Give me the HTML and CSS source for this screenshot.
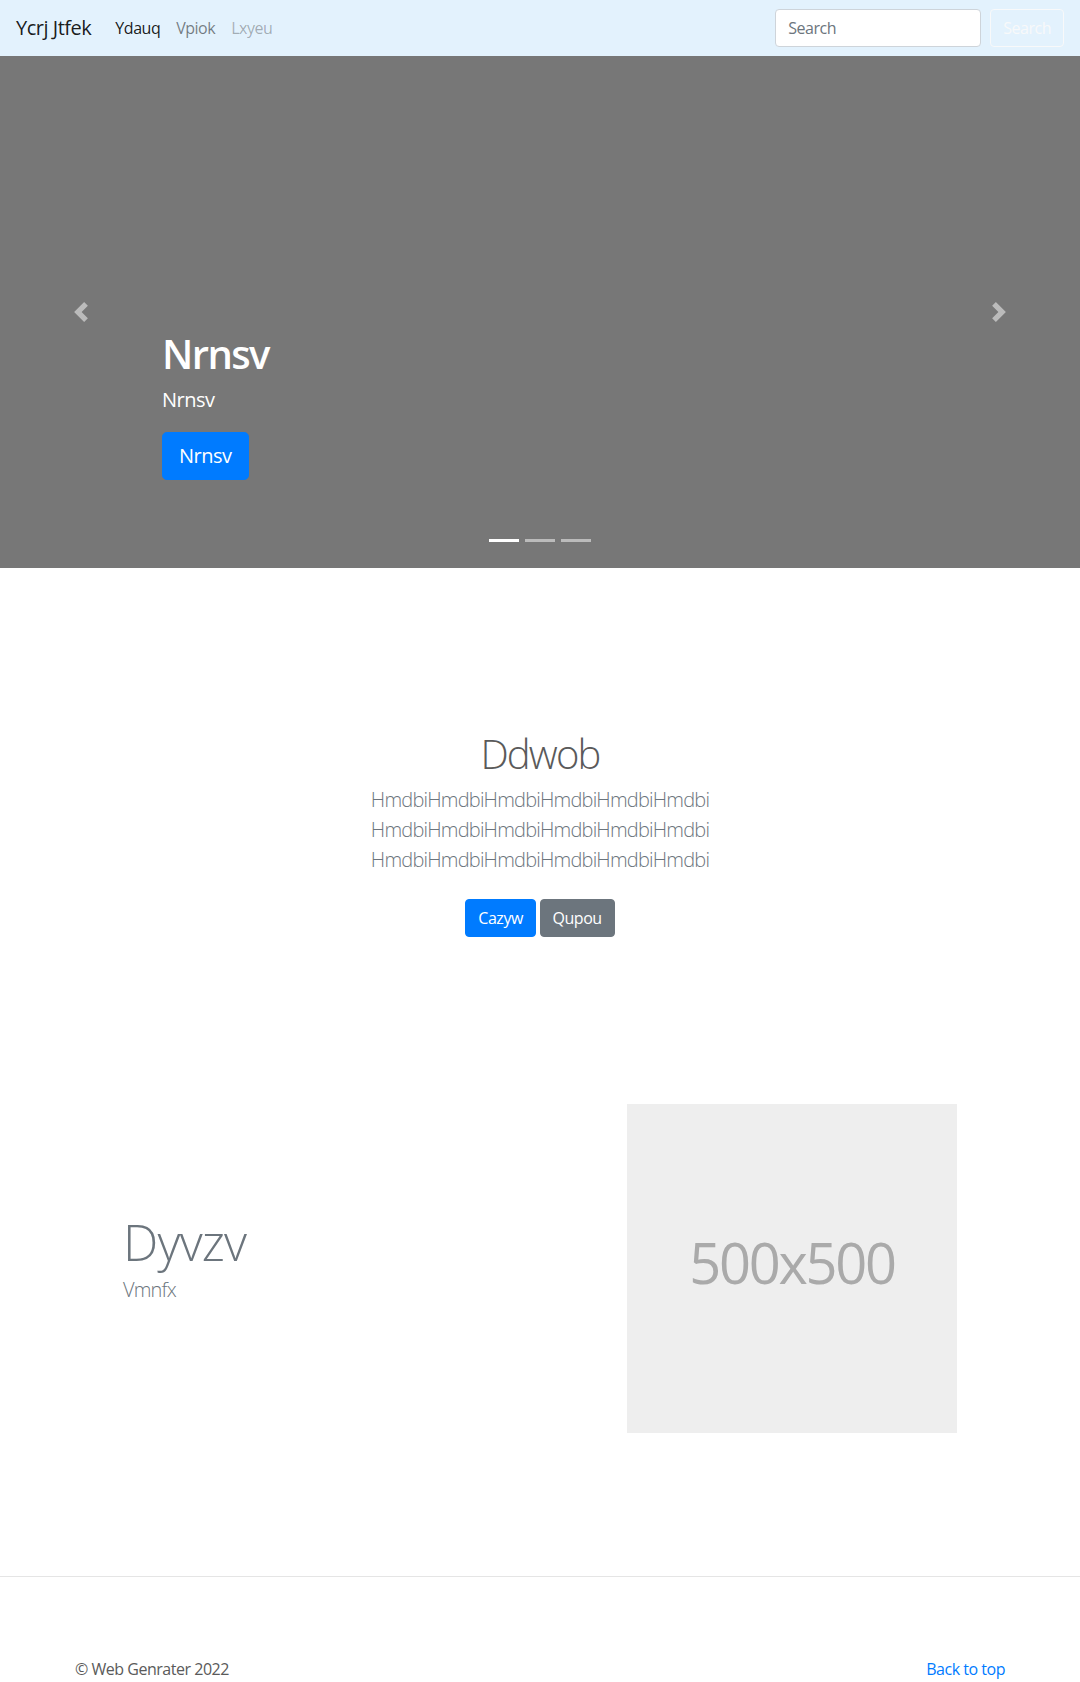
FILE: index.html
```html
<!DOCTYPE html>
<html lang="en">
<head>
<meta charset="utf-8">
<title>Ycrj Jtfek</title>
<link rel="stylesheet" href="styles.css">
</head>
<body>
<header class="navbar">
  <a class="brand" href="#">Ycrj Jtfek</a>
  <nav class="nav">
    <a class="nav-link active" href="#">Ydauq</a>
    <a class="nav-link" href="#">Vpiok</a>
    <a class="nav-link disabled" href="#">Lxyeu</a>
  </nav>
  <form class="search">
    <input class="search-input" type="search" placeholder="Search" aria-label="Search">
    <button class="btn btn-outline-light" type="button">Search</button>
  </form>
</header>

<main class="main">
  <section class="carousel">
    <ol class="indicators">
      <li class="active"></li>
      <li></li>
      <li></li>
    </ol>
    <div class="caption">
      <h1 class="caption-title">Nrnsv</h1>
      <p class="caption-text">Nrnsv</p>
      <div class="caption-action"><a class="btn btn-lg btn-primary" href="#">Nrnsv</a></div>
    </div>
    <a class="control control-prev" href="#" aria-label="Previous">
      <svg class="control-icon" viewBox="0 0 8 8" width="20" height="20"><path d="M5.25 0l-4 4 4 4 1.5-1.5L4.25 4l2.5-2.5L5.25 0z" fill="#fff"/></svg>
    </a>
    <a class="control control-next" href="#" aria-label="Next">
      <svg class="control-icon" viewBox="0 0 8 8" width="20" height="20"><path d="M2.75 0l-1.5 1.5L3.75 4l-2.5 2.5L2.75 8l4-4-4-4z" fill="#fff"/></svg>
    </a>
  </section>

  <section class="intro">
    <div class="intro-inner">
      <h1 class="intro-title">Ddwob</h1>
      <p class="intro-lead">HmdbiHmdbiHmdbiHmdbiHmdbiHmdbi HmdbiHmdbiHmdbiHmdbiHmdbiHmdbi HmdbiHmdbiHmdbiHmdbiHmdbiHmdbi</p>
      <p class="intro-actions"><a class="btn btn-primary" href="#">Cazyw</a> <a class="btn btn-secondary" href="#">Qupou</a></p>
    </div>
  </section>

  <section class="featurette">
    <div class="feat-text">
      <h2 class="feat-title">Dyvzv</h2>
      <p class="feat-lead">Vmnfx</p>
    </div>
    <div class="feat-media">
      <div class="placeholder">500x500</div>
    </div>
  </section>
</main>

<hr class="divider">

<footer class="footer">
  <p class="footer-copy">&copy; Web Genrater 2022</p>
  <p class="footer-top"><a href="#">Back to top</a></p>
</footer>
</body>
</html>
```

FILE: styles.css
```css
* {
  box-sizing: border-box;
}

html, body {
  margin: 0;
  padding: 0;
}

body {
  font-family: "Open Sans", "Noto Sans", "Liberation Sans", sans-serif;
  font-size: 16px;
  line-height: 1.5;
  letter-spacing: -0.03em;
  color: #5a5a5a;
  background: #fff;
}

a {
  text-decoration: none;
}

/* Navbar */
.navbar {
  display: flex;
  align-items: center;
  height: 56px;
  padding: 8px 16px;
  background: #e3f2fd;
}

.brand {
  font-size: 20px;
  line-height: 30px;
  padding: 5px 0;
  margin-right: 16px;
  color: rgba(0, 0, 0, 0.9);
}

.nav {
  display: flex;
}

.nav-link {
  padding: 8px;
  line-height: 24px;
  color: rgba(0, 0, 0, 0.5);
}

.nav-link.active {
  color: rgba(0, 0, 0, 0.9);
}

.nav-link.disabled {
  color: rgba(0, 0, 0, 0.3);
}

.search {
  margin: 0 0 0 auto;
  display: flex;
  align-items: center;
}

.search-input {
  width: 206px;
  height: 38px;
  margin-right: 9px;
  padding: 6px 12px;
  font-family: inherit;
  letter-spacing: inherit;
  font-size: 16px;
  line-height: 24px;
  color: #495057;
  background: #fff;
  border: 1px solid #ced4da;
  border-radius: 4px;
  outline: none;
}

.search-input::placeholder {
  color: #6c757d;
}

/* Buttons */
.btn {
  display: inline-block;
  font-family: inherit;
  letter-spacing: inherit;
  font-size: 16px;
  line-height: 24px;
  padding: 6px 12px;
  border: 1px solid transparent;
  border-radius: 4px;
  background: transparent;
  text-align: center;
  vertical-align: middle;
}

.btn-outline-light {
  color: #f8f9fa;
  border-color: #f8f9fa;
}

.btn-primary {
  color: #fff;
  background: #007bff;
  border-color: #007bff;
}

.btn-secondary {
  color: #fff;
  background: #6c757d;
  border-color: #6c757d;
}

.btn-lg {
  font-size: 20px;
  line-height: 30px;
  padding: 8px 16px;
  border-radius: 4.8px;
}

/* Carousel */
.main {
  padding-bottom: 63px;
}

.carousel {
  position: relative;
  height: 512px;
  background: #777;
  overflow: hidden;
}

.indicators {
  position: absolute;
  left: 15%;
  right: 15%;
  bottom: 0;
  margin: 0 0 16px;
  padding: 0;
  list-style: none;
  display: flex;
  justify-content: center;
  z-index: 5;
}

.indicators li {
  box-sizing: content-box;
  width: 30px;
  height: 3px;
  margin: 0 3px;
  background: #fff;
  background-clip: padding-box;
  border-top: 10px solid transparent;
  border-bottom: 10px solid transparent;
  opacity: 0.5;
}

.indicators li.active {
  opacity: 1;
}

.caption {
  position: absolute;
  left: 15%;
  right: 15%;
  bottom: 52px;
  padding: 20px 0;
  color: #fff;
  text-align: left;
  z-index: 4;
}

.caption-title {
  margin: 0 0 8px;
  font-size: 40px;
  line-height: 48px;
  font-weight: 600;
  letter-spacing: -0.04em;
}

.caption-text {
  margin: 0 0 16px;
  font-size: 20px;
  line-height: 28px;
  padding-bottom: 2px;
}

.caption-action {
  margin: 0 0 16px;
  height: 48px;
}

.control {
  position: absolute;
  top: 0;
  bottom: 0;
  width: 15%;
  display: flex;
  align-items: center;
  justify-content: center;
  opacity: 0.5;
  z-index: 3;
}

.control-prev {
  left: 0;
}

.control-next {
  right: 0;
}

.control-icon {
  display: block;
  width: 20px;
  height: 20px;
}

/* Intro */
.intro {
  padding: 162px 0 0;
}

.intro-inner {
  width: 610px;
  margin: 0 auto;
  text-align: center;
}

.intro-title {
  margin: 0 0 7px;
  font-size: 40px;
  line-height: 48px;
  font-weight: 300;
  letter-spacing: -0.045em;
  color: #5a5a5a;
}

.intro-lead {
  margin: 0 0 16px;
  font-size: 20px;
  line-height: 30px;
  font-weight: 300;
  letter-spacing: -0.04em;
  color: #6c757d;
}

.intro-actions {
  margin: 0;
}

.intro-actions .btn {
  margin: 8px 0;
}

/* Featurette */
.featurette {
  width: 864px;
  margin: 159px auto 0;
  display: flex;
  align-items: center;
}

.feat-text {
  flex: 0 0 504px;
  padding: 0 15px;
}

.feat-title {
  margin: 0 0 8px;
  font-size: 50px;
  line-height: 1;
  font-weight: 300;
  letter-spacing: -0.8px;
  color: #6c757d;
}

.feat-lead {
  margin: 0 0 16px;
  font-size: 20px;
  line-height: 30px;
  font-weight: 300;
  letter-spacing: -0.04em;
  color: #6c757d;
}

.feat-media {
  flex: 0 0 360px;
  padding: 0 15px;
}

.placeholder {
  width: 330px;
  height: 329px;
  display: flex;
  align-items: center;
  justify-content: center;
  padding-bottom: 13px;
  background: #eee;
  color: #aaa;
  font-size: 56px;
  line-height: 1;
  letter-spacing: -0.04em;
}

/* Footer */
.divider {
  margin: 80px 0;
  border: 0;
  border-top: 1px solid rgba(0, 0, 0, 0.1);
  height: 0;
}

.footer {
  width: 960px;
  margin: 0 auto;
  padding: 0 15px;
  display: flex;
  justify-content: space-between;
}

.footer p {
  margin: 0;
}

.footer-top a {
  color: #007bff;
}
```
